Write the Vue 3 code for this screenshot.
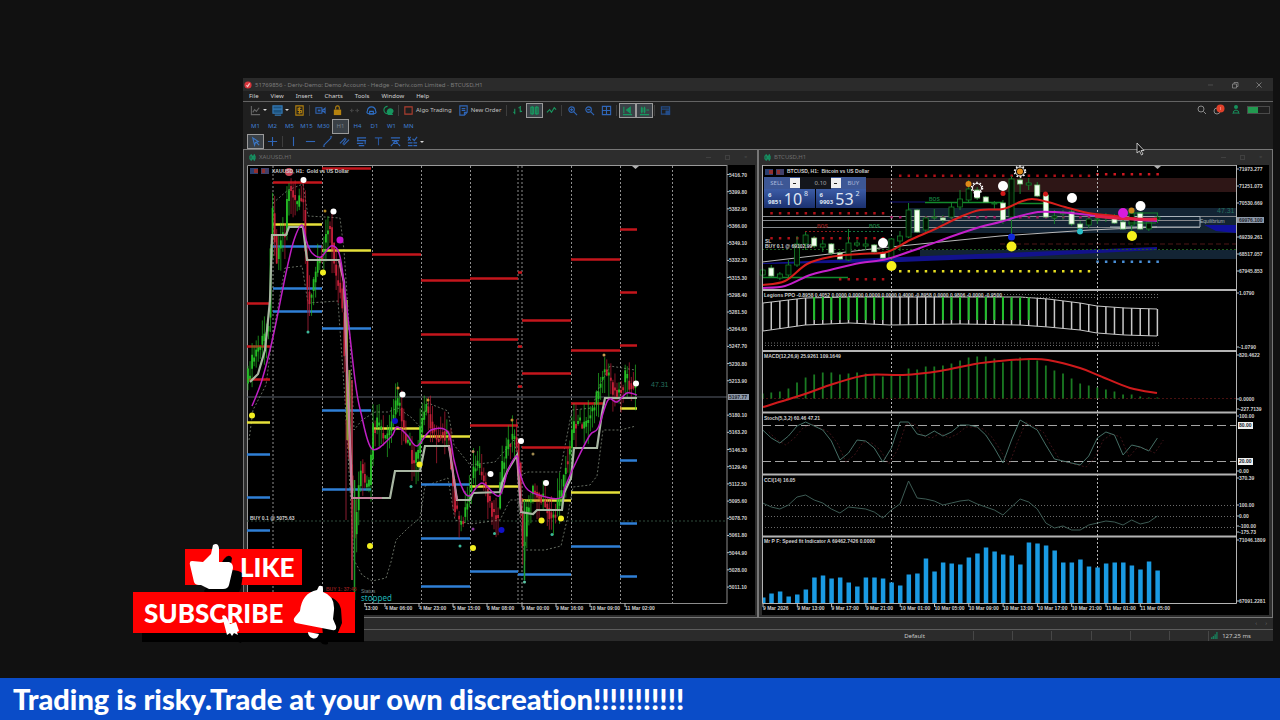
<script setup>
import { ref } from 'vue'

const volume = ref('0.10')

/* ---------- 菜单与工具栏 ---------- */
const menus = ['File', 'View', 'Insert', 'Charts', 'Tools', 'Window', 'Help']
const timeframes = ['M1', 'M2', 'M5', 'M15', 'M30', 'H1', 'H4', 'D1', 'W1', 'MN']

const BLUE = '#2f66b8'
const GREEN = '#17965f'
const GOLD = '#b5820f'
const GREY = '#666'

const mainTools = [
  { name: 'Chart type', caret: true, paths: [{ d: 'M1.5 1v9.5H11M3 8l2-3 2 2 3-4', s: GREY }] },
  { name: 'Profiles', caret: true, paths: [{ d: 'M1 1h10v8H1z', f: '#1d5480' }, { d: 'M1 1h10v8H1zM1 4.5h10M3 11h7', s: '#3479b5' }] },
  { name: 'Symbols', paths: [{ d: 'M2 1h8v10H2z', s: GOLD }, { d: 'M8 3.5H4.500V6H8v2.500H4M6 2.500v7', s: GOLD }] },
  { sep: true },
  { name: 'Video', paths: [{ d: 'M1 3h6.500v6H1zM8 6l3-2.500v5z', s: BLUE }, { d: 'M3 5h3v2H3z', f: BLUE }] },
  { name: 'Lock', paths: [{ d: 'M2 5h8v6H2z', f: GOLD }, { d: 'M4 5V3q0-2 2-2t2 2v2', s: GOLD }] },
  { name: 'Signals', paths: [{ d: 'M1 6h1M4 6h1M7 6h1M10 6h1M3 4v4M9 4v4', s: '#4b4b4b' }] },
  { name: 'Cloud', paths: [{ d: 'M3 9.500Q0 9 1.500 6.500 2 2 6 2t4.500 4.500Q12 9 9 9.500zM4 7h4v3H4z', s: '#2e70c8' }] },
  { name: 'Community', paths: [{ d: 'M5 5a3.500 3 0 1 1 5 4l1 2H7q-3 0-3-4z', f: GREEN }, { d: 'M5 1.500a4 4 0 1 0 0 8', s: GREEN }] },
  { sep: true },
  { name: 'Algo Trading', label: true, paths: [{ d: 'M2 2h8v8H2z', s: '#b03f30' }] },
  { name: 'New Order', label: true, paths: [{ d: 'M2 1h8v7l-3 3H2zM4 4h4M4 6h4M7 11V8h3', s: BLUE }] },
  { sep: true },
  { name: 'Bars', paths: [{ d: 'M3 4v6M1.500 8H3M9 1v7M7 3h2M9 7h2', s: GREEN }] },
  { name: 'Candles', active: true, paths: [{ d: 'M3.500 1v10M8.500 1v10', s: GREEN }, { d: 'M2 2.500h3v7H2zM7 2.500h3v7H7z', s: GREEN }] },
  { name: 'Line', paths: [{ d: 'M1 8l3-3 2 3 3-5 2 2', s: GREEN }] },
  { sep: true },
  { name: 'Zoom in', paths: [{ d: 'M8 5a3 3 0 1 1-6 0 3 3 0 0 1 6 0zM7.500 7.500L11 11M3.500 5h3M5 3.500v3', s: BLUE }] },
  { name: 'Zoom out', paths: [{ d: 'M8 5a3 3 0 1 1-6 0 3 3 0 0 1 6 0zM7.500 7.500L11 11M3.500 5h3', s: BLUE }] },
  { name: 'Tile windows', paths: [{ d: 'M1.500 1.500h9v9h-9zM6 1.500v9M1.500 6h9', s: BLUE }] },
  { sep: true },
  { name: 'Auto scroll', active: true, paths: [{ d: 'M2 2v7M5 5.500l4-3v6zM1 10.500h10', s: GREEN }, { d: 'M5 5.500l4-3v6z', f: GREEN }] },
  { name: 'Chart shift', active: true, paths: [{ d: 'M3 2v7M6 2v7M8 5.500h3M1 10.500h10', s: GREEN }, { d: 'M2 3h2v5H2zM5 3h2v5H5z', f: GREEN }] },
  { sep: true },
  { name: 'Templates', paths: [{ d: 'M1.500 2h9v8h-9zM1.500 4.500h9', s: '#244c87' }, { d: 'M6 6h5v5H6z', f: '#244c87' }] },
]

const drawTools = [
  { name: 'Cursor', active: true, paths: [{ d: 'M3 2l6 4-3 1-1 3zM7 7l3 3', s: '#3b78c8' }] },
  { name: 'Crosshair', paths: [{ d: 'M6 1v10M1 6h10', s: BLUE }] },
  { sep: true },
  { name: 'Vertical line', paths: [{ d: 'M6 1v10', s: BLUE }] },
  { name: 'Horizontal line', paths: [{ d: 'M1 6h10', s: BLUE }] },
  { name: 'Trendline', paths: [{ d: 'M2 10l8-8M1 11h2M9 1h2', s: BLUE }] },
  { name: 'Channel', paths: [{ d: 'M1 8l6-6M5 10l6-6M4 9l4-6', s: BLUE }] },
  { name: 'Fibonacci', paths: [{ d: 'M1 2h10M1 5h10M1 8h7M3 10.500h6M2 2v4M10 5v4', s: BLUE }] },
  { name: 'Text', paths: [{ d: 'M2 2h8M6 2v8', s: '#28559a' }] },
  { name: 'Gann', paths: [{ d: 'M1 2h10M2 5h8M1 11l5-6 5 6M3 8h6', s: BLUE }] },
  { name: 'Shapes', caret: true, paths: [{ d: 'M1 1l3 4M4 1L1 5M6 3l2 2 3-4M1 7.500h5M1 10.500h5M7 7.500h4M7 10.500h4', s: BLUE }] },
]

/* ---------- 曲线工具 ---------- */
const line = (pts) => 'M' + pts.map((p) => p.join(' ')).join('L')

function smooth(pts) {
  let d = `M${pts[0][0]} ${pts[0][1]}`
  for (let i = 0; i < pts.length - 1; i++) {
    const p0 = pts[i - 1] || pts[i]
    const p1 = pts[i]
    const p2 = pts[i + 1]
    const p3 = pts[i + 2] || p2
    d += `C${p1[0] + (p2[0] - p0[0]) / 6} ${p1[1] + (p2[1] - p0[1]) / 6} ${p2[0] - (p3[0] - p1[0]) / 6} ${p2[1] - (p3[1] - p1[1]) / 6} ${p2[0]} ${p2[1]}`
  }
  return d
}

function valueAt(pts, x) {
  for (let i = 1; i < pts.length; i++) {
    if (x <= pts[i][0]) {
      const [x0, y0] = pts[i - 1]
      const [x1, y1] = pts[i]
      return y0 + ((y1 - y0) * (x - x0)) / (x1 - x0)
    }
  }
  return pts[pts.length - 1][1]
}

const noise = (n) => {
  const v = Math.sin(n * 12.9898) * 43758.5453
  return v - Math.floor(v)
}

/* ---------- XAUUSD ---------- */
const goldPath = [
  [247, 380], [252, 362], [256, 352], [262, 342], [268, 328], [270, 290], [271, 205], [273, 215], [277, 262],
  [281, 232], [285, 235], [288, 184], [291, 190], [294, 197], [297, 208], [299, 198], [303, 200], [305, 250],
  [308, 300], [312, 290], [318, 262], [322, 250], [325, 238], [328, 226], [331, 228], [333, 255], [336, 280],
  [340, 285], [343, 320], [346, 400], [348, 450], [352, 490], [355, 540], [357, 505], [361, 462], [365, 488], [369, 485],
  [371, 460], [373, 430], [377, 425], [385, 440], [390, 430], [396, 404], [400, 408], [404, 435], [410, 450],
  [413, 465], [418, 455], [421, 425], [426, 405], [430, 420], [436, 440], [442, 430], [448, 438], [451, 470],
  [454, 500], [459, 525], [463, 518], [468, 500], [472, 475], [476, 465], [482, 476], [490, 503], [495, 518],
  [498, 510], [502, 470], [506, 450], [510, 440], [514, 436], [518, 445], [520, 500], [523, 550], [525, 535],
  [527, 510], [532, 490], [540, 495], [546, 505], [552, 518], [558, 505], [562, 485], [566, 460], [570, 448],
  [573, 425], [578, 420], [583, 430], [590, 412], [596, 402], [600, 380], [604, 368], [610, 380], [614, 390],
  [620, 390], [625, 378], [630, 384], [637, 392],
]

const goldBars = []
for (let i = 0; i < 190; i++) {
  const x = 248 + i * 2.05
  if (x > 637) break
  const open = valueAt(goldPath, x - 2)
  const close = valueAt(goldPath, x) + (noise(i) - 0.5) * 16
  goldBars.push({
    x,
    top: Math.min(open, close),
    h: Math.max(3, Math.abs(close - open)),
    high: Math.min(open, close) - noise(i + 400) * 20,
    low: Math.max(open, close) + noise(i + 900) * 24,
    color: close < open ? '#25bd25' : '#c42038',
  })
}

const goldDays = [273, 322.5, 372.5, 421.5, 470.5, 518, 522, 571.5, 620.5, 672.5]

const RED = '#c4161c'
const YEL = '#e6e03a'
const AZU = '#2f7fd6'
const goldLevels = [
  [RED, 322, 371, 168], [RED, 273, 322, 182], [RED, 247, 270, 303], [RED, 247, 270, 346], [RED, 247, 270, 379],
  [RED, 372, 421, 254], [RED, 421, 470, 280], [RED, 470, 518, 278], [RED, 421, 470, 334], [RED, 470, 518, 339],
  [RED, 421, 470, 382], [RED, 470, 518, 425], [RED, 518, 522, 272], [RED, 518, 522, 346], [RED, 518, 522, 386],
  [RED, 522, 571, 320], [RED, 522, 571, 373], [RED, 522, 571, 447], [RED, 571, 620, 259], [RED, 571, 620, 350],
  [RED, 571, 605, 403], [RED, 620, 637, 229], [RED, 620, 637, 292], [RED, 620, 637, 345],
  [YEL, 273, 322, 224], [YEL, 322, 371, 250], [YEL, 247, 270, 422], [YEL, 372, 421, 428], [YEL, 421, 470, 436],
  [YEL, 470, 518, 486], [YEL, 522, 571, 500], [YEL, 571, 620, 492], [YEL, 620, 637, 408],
  [AZU, 273, 322, 246], [AZU, 273, 322, 288], [AZU, 273, 322, 311], [AZU, 322, 371, 328], [AZU, 322, 371, 410],
  [AZU, 322, 371, 489], [AZU, 247, 270, 454], [AZU, 247, 270, 497], [AZU, 247, 270, 530], [AZU, 421, 470, 484],
  [AZU, 421, 470, 538], [AZU, 421, 470, 586], [AZU, 470, 518, 571], [AZU, 518, 571, 574], [AZU, 571, 620, 546],
  [AZU, 620, 637, 460], [AZU, 620, 637, 523], [AZU, 620, 637, 576],
]

const goldStep = line([
  [250, 382], [258, 374], [265, 350], [270, 300], [272, 235], [286, 235], [289, 227], [303, 227], [307, 260],
  [339, 260], [344, 282], [346, 340], [352, 498], [390, 498], [395, 471], [420, 471], [425, 446], [449, 446],
  [457, 500], [470, 500], [473, 493], [500, 492], [502, 483], [508, 470], [517, 455], [521, 512], [533, 514],
  [537, 510], [562, 510], [564, 493], [571, 478], [574, 448], [597, 448], [602, 413], [605, 398], [637, 398],
])
const goldMa = smooth([
  [252, 406], [262, 380], [273, 337], [286, 273], [294, 240], [302, 225], [307, 243], [312, 253], [321, 257],
  [331, 246], [339, 253], [344, 283], [355, 380], [361, 413], [372, 449], [391, 437], [397, 427], [407, 435],
  [417, 446], [431, 430], [448, 432], [454, 460], [461, 485], [469, 496], [482, 483], [499, 496], [508, 470],
  [517, 456], [520, 473], [528, 490], [550, 498], [562, 497], [565, 487], [577, 460], [590, 435], [598, 428],
  [608, 400], [617, 402], [627, 393], [637, 395],
])
const goldBandUp = line([
  [273, 203], [280, 197], [288, 190], [303, 184], [308, 216], [325, 217], [340, 218], [344, 250], [350, 340],
  [354, 430], [362, 420], [375, 412], [388, 412], [398, 408], [412, 418], [421, 428], [428, 403], [448, 411], [454, 445],
  [470, 465], [495, 462], [514, 440], [521, 475], [528, 472], [560, 472], [572, 410], [592, 408], [600, 385], [610, 366], [635, 370],
])
const goldBandLow = line([
  [249, 440], [253, 410], [266, 385], [272, 340], [285, 268], [302, 266], [308, 303], [338, 301], [345, 400],
  [354, 560], [362, 575], [372, 581], [386, 578], [391, 562], [396, 540], [408, 528], [420, 518], [425, 486],
  [448, 478], [455, 520], [470, 524], [500, 520], [510, 500], [518, 500], [524, 550], [545, 550], [561, 546],
  [567, 520], [573, 487], [590, 485], [597, 476], [603, 430], [620, 430], [636, 426],
])

const goldDots = [
  [289, 172, 4, '#c84858'], [303.500, 180, 3, '#fff'], [333.500, 211.500, 3, '#fff'], [402.500, 394.500, 3, '#fff'],
  [490.500, 474, 3, '#fff'], [521, 441, 3, '#fff'], [546, 483, 3, '#fff'], [636, 383.500, 3, '#fff'],
  [340, 240, 3.500, '#c414cc'], [323, 272.500, 3, '#f2ee20'], [252, 415.500, 3, '#f2ee20'], [370, 546, 3, '#f2ee20'],
  [419.500, 464.500, 3, '#f2ee20'], [473, 548, 3, '#f2ee20'], [541.500, 520.500, 3, '#f2ee20'], [561, 518.500, 3, '#f2ee20'],
  [395, 421, 3, '#1010c8'], [501.500, 530, 3, '#1010c8'], [325, 211, 1.500, '#b58a1e'], [398, 388, 1.500, '#d08a30'],
  [428, 400, 1.500, '#d08a30'], [473, 451.500, 1.500, '#c08a60'], [512, 420, 1.500, '#c88a30'], [533, 454, 1.500, '#a08a50'],
  [604, 355, 1.500, '#c89a50'], [308, 332, 1.500, '#3cb89a'], [411, 486.500, 1.500, '#3cb89a'], [460, 546, 1.500, '#3cb89a'],
  [494.500, 533.500, 1.500, '#3cb89a'], [552, 534.500, 1.500, '#3cb89a'], [524.500, 582, 1.500, '#5cc8a8'], [473, 529, 1.500, '#8a3aa0'],
]

const goldPrices = []
for (let i = 0; i < 25; i++) {
  if (i !== 13) goldPrices.push({ y: 174.5 + i * 17.19, text: (5416.7 - i * 16.9).toFixed(2) })
}
const goldTimes = [
  [365, '13:00'], [385, '4 Mar 06:00'], [419, '4 Mar 23:00'], [453, '5 Mar 15:00'], [487, '6 Mar 08:00'],
  [522, '9 Mar 00:00'], [556, '9 Mar 16:00'], [590, '10 Mar 09:00'], [625, '11 Mar 02:00'],
]

/* ---------- BTCUSD ---------- */
const barX = (k) => 762.7 + k * 8.58
const range = (a, b) => Array.from({ length: b - a + 1 }, (_, i) => a + i)

// [实体上沿, 实体下沿, 最高, 最低, 实心]
const btcCandles = [
  [270, 275, 268, 277, 0], [268, 276, 265, 278, 1], [274, 278, 272, 280, 0], [265, 275, 260, 280, 0], [244, 265, 236, 267, 0],
  [235, 244, 232, 250, 0], [238, 246, 236, 248, 1], [244, 247, 240, 252, 0], [244, 253, 243, 255, 1], [253, 259, 251, 260, 1],
  [243, 260, 229, 261, 0], [243, 245, 240, 247, 0], [244, 246, 239, 250, 0], [245, 252, 244, 253, 1], [253, 258, 251, 259, 1],
  [239, 258, 238, 260, 0], [236, 241, 231, 251, 0], [210, 237, 203, 238, 0], [210, 232, 209, 233, 1], [218, 230, 216, 232, 0],
  [217, 218, 209, 220, 0], [218, 220, 215, 223, 1], [207, 217, 203, 219, 0], [199, 207, 190, 210, 0], [189, 200, 180, 202, 0],
  [190, 198, 187, 200, 1], [197, 202, 196, 203, 1], [203, 204, 201, 209, 0], [203, 220, 200, 224, 1], [179, 217, 176, 234, 0],
  [180, 184, 177, 194, 1], [183, 185, 178, 190, 0], [185, 196, 182, 197, 1], [195, 217, 194, 218, 1], [216, 218, 210, 224, 0],
  [213, 214, 210, 220, 0], [212, 224, 210, 226, 1], [224, 228, 221, 230, 1], [219, 225, 218, 228, 0], [219, 220, 216, 224, 0],
  [216, 217, 213, 222, 0], [216, 223, 214, 224, 1], [222, 229, 217, 230, 1], [213, 225, 212, 232, 0], [213, 229, 212, 230, 1],
  [222, 229, 219, 231, 0], [217, 219, 213, 223, 0],
]

const btcMa = smooth([
  [763, 285], [785, 281], [807, 264], [830, 257], [860, 254], [887, 252], [910, 240], [933, 230], [960, 217], [980, 210],
  [1003, 209], [1020, 202], [1032, 199], [1048, 202], [1065, 207], [1088, 213], [1115, 216], [1138, 219], [1157, 219],
])
const btcSlow = smooth([
  [763, 288], [785, 286], [810, 275], [830, 270], [860, 263], [887, 259], [920, 248], [950, 237], [980, 227], [1000, 222],
  [1020, 216], [1038, 212], [1055, 212], [1080, 214], [1110, 217], [1140, 220], [1157, 221],
])

const dotRows = [
  { y: 213, from: 1, to: 14, c: '#b01018' },
  { y: 238, from: 1, to: 14, c: '#b01018' },
  { y: 279, from: 9, to: 14, c: '#b01018' },
  { y: 175.5, from: 16, to: 38, c: '#b01018' },
  { y: 174, from: 39, to: 46, c: '#d01820' },
  { y: 217, from: 15, to: 44, c: '#a01860' },
  { y: 271, from: 16, to: 38, c: '#e6de20' },
  { y: 261.5, from: 39, to: 46, c: '#4a90d8' },
]

const btcDots = [
  [883, 243, 5, '#fff'], [1003, 186, 5, '#fff'], [1072, 198, 5, '#fff'], [1140.500, 206, 5, '#fff'],
  [891.500, 266, 5, '#f6f01c'], [1011.500, 246.500, 5, '#f6f01c'], [1132, 236, 5, '#f6f01c'], [1123, 213, 5, '#d81cdc'],
  [968.500, 184, 3, '#e08a18'], [1131.500, 210.500, 3, '#c8861c'], [1011.500, 237, 3.500, '#1028d8'], [1003, 193.500, 2.500, '#d01818'],
  [1045.500, 194, 2.500, '#d01818'], [1080, 231.500, 3, '#28c0c8'],
]

const ppoTop = [[763, 303], [805, 298], [850, 297], [1020, 297], [1048, 299], [1080, 303], [1097, 306], [1125, 308], [1157, 309]]
const ppoLow = [[763, 331], [805, 325], [850, 323], [890, 325], [960, 324], [1020, 325], [1048, 327], [1080, 330], [1097, 333], [1125, 335], [1157, 336]]
const ppoGreen = (k) => (k >= 6 && k <= 14) || (k >= 21 && k <= 31)

const macd = [
  5, 6, 7, 10, 16, 21, 24, 26, 26, 24, 25, 26, 25, 24, 22, 23, 23, 30, 29, 32, 32, 33, 35, 38, 41, 42, 42, 40, 36, 38,
  41, 40, 38, 33, 28, 25, 20, 15, 13, 11, 9, 7, 4, 4, 2, 1, 1,
]
const macdSignal = smooth([
  [763, 407], [805, 394], [833, 384], [867, 375], [903, 375], [940, 371], [975, 364], [1000, 361], [1030, 359],
  [1048, 360], [1080, 368], [1100, 376], [1130, 388], [1157, 393],
])
const stoch = [
  430, 438, 443, 436, 426, 422, 426, 430, 441, 460, 453, 440, 441, 448, 462, 448, 422, 422, 434, 436, 431, 436, 432,
  425, 425, 427, 435, 448, 463, 440, 420, 425, 430, 445, 459, 461, 463, 465, 456, 438, 432, 435, 455, 445, 447, 451, 438,
]
const cci = [
  503, 507, 509, 505, 497, 495, 500, 503, 509, 513, 507, 508, 509, 512, 518, 510, 504, 481, 498, 499, 501, 505, 503, 501,
  500, 504, 507, 510, 515, 507, 499, 502, 509, 523, 528, 526, 530, 530, 525, 523, 521, 522, 525, 520, 524, 522, 516,
]
const speed = [
  6, 10, 12, 7, 9, 14, 26, 28, 25, 26, 21, 17, 26, 26, 25, 21, 18, 29, 30, 45, 32, 41, 40, 39, 46, 50, 56, 52, 49, 48,
  39, 61, 60, 58, 53, 41, 41, 44, 37, 36, 40, 41, 41, 38, 34, 42, 33,
]
const series = (arr, dx = 0, dy = 0) => line(arr.map((y, k) => [barX(k) + dx, y + dy]))

const btcPrices = [
  [169, '71973.277'], [186, '71251.073'], [203, '70530.669'], [237, '69239.261'], [254, '68517.057'], [271, '67945.853'],
  [293, '1.0790'], [347, '-1.0790'], [355, '820.4622'], [399, '0.0000'], [409, '-227.7139'], [416, '100.00'],
  [471, '0.00'], [478, '370.39'], [505, '100.00'], [516, '0.00'], [526, '-100.00'], [532, '-175.73'],
  [540, '71046.1809'], [601, '67091.2281'],
]
const btcTimes = [
  '9 Mar 2026', '9 Mar 13:00', '9 Mar 17:00', '9 Mar 21:00', '10 Mar 01:00', '10 Mar 05:00', '10 Mar 09:00',
  '10 Mar 13:00', '10 Mar 17:00', '10 Mar 21:00', '11 Mar 01:00', '11 Mar 05:00',
].map((text, i) => ({ text, x: 763 + i * 34.3 }))

const panelTitles = [
  [297, 'Legions PPO -0.8958 0.4052 0.0000 0.0000 0.0000 0.0000 0.4000 -0.8958 0.0000 0.9806 -0.0000 -0.9500'],
  [358, 'MACD(12,26,9) 25.9261 109.1649'],
  [420, 'Stoch(5,3,2) 60.46 47.21'],
  [482, 'CCI(14) 16.05'],
  [543, 'Mr P F:  Speed fit Indicator A 69462.7426 0.0000'],
]
</script>

<template>
  <div class="stage">
    <main class="scene">
      <section class="terminal">
        <header class="titlebar">
          <svg class="logo" viewBox="0 0 10 10" aria-hidden="true">
            <circle cx="5" cy="5" r="4.500" fill="#d8353c" />
            <path d="M3 5.500l1.500 1.500L7 3" fill="none" stroke="#f6c8c8" stroke-width="1.500" />
          </svg>
          <span class="titlebar-text">51769856 - Deriv-Demo: Demo Account - Hedge - Deriv.com Limited - BTCUSD,H1</span>
          <div class="win-btns">
            <button type="button" aria-label="Minimize">
              <svg viewBox="0 0 8 8"><path d="M1 4h5" stroke="#555" /></svg>
            </button>
            <button type="button" aria-label="Restore">
              <svg viewBox="0 0 8 8"><path d="M1.500 3h4v4h-4zM3 3V1.500h4v4H5.500" /></svg>
            </button>
            <button type="button" aria-label="Close">
              <svg viewBox="0 0 8 8"><path d="M1.500 1.500l5 5M6.500 1.500l-5 5" /></svg>
            </button>
          </div>
        </header>

        <nav class="menubar">
          <button v-for="m in menus" :key="m" type="button">{{ m }}</button>
        </nav>

        <div class="toolbars">
          <div class="toolbar">
            <template v-for="(t, i) in mainTools" :key="i">
              <span v-if="t.sep" class="sep"></span>
              <button v-else type="button" class="tool" :class="{ 'is-on': t.active, 'has-caret': t.caret, 'has-label': t.label }" :aria-label="t.name">
                <svg viewBox="0 0 12 12" aria-hidden="true">
                  <path v-for="(p, j) in t.paths" :key="j" :d="p.d" :fill="p.f || 'none'" :stroke="p.s || 'none'" />
                </svg>
                <span v-if="t.label">{{ t.name }}</span>
                <i v-if="t.caret" class="caret"></i>
              </button>
            </template>
            <div class="account">
              <button type="button" aria-label="Search">
                <svg viewBox="0 0 12 12"><path d="M8 5a3 3 0 1 1-6 0 3 3 0 0 1 6 0zM7.500 7.500L10 10" stroke="#8a8a8a" /></svg>
              </button>
              <button type="button" aria-label="Notifications">
                <svg viewBox="0 0 12 12">
                  <circle cx="4" cy="7" r="3" stroke="#8a8a8a" />
                  <circle cx="7.500" cy="4.500" r="4" fill="#e0402a" />
                  <path d="M7.500 3v3" stroke="#f08070" />
                </svg>
              </button>
              <button type="button" aria-label="Account">
                <svg viewBox="0 0 12 12">
                  <circle cx="6" cy="3" r="2" fill="#17905c" />
                  <path d="M3 10q0-4 3-4t3 4M5 10V8M7 10V8" stroke="#17905c" />
                </svg>
              </button>
              <span class="battery"><i></i></span>
            </div>
          </div>
          <div class="toolbar">
            <button v-for="t in timeframes" :key="t" type="button" class="tool tf" :class="{ 'is-on': t === 'H1' }">{{ t }}</button>
          </div>
          <div class="toolbar">
            <template v-for="(t, i) in drawTools" :key="i">
              <span v-if="t.sep" class="sep"></span>
              <button v-else type="button" class="tool" :class="{ 'is-on': t.active, 'has-caret': t.caret }" :aria-label="t.name">
                <svg viewBox="0 0 12 12" aria-hidden="true">
                  <path v-for="(p, j) in t.paths" :key="j" :d="p.d" :fill="p.f || 'none'" :stroke="p.s || 'none'" />
                </svg>
                <i v-if="t.caret" class="caret"></i>
              </button>
            </template>
          </div>
        </div>

        <div class="mdi">
          <article class="child">
            <header class="child-title">
              <svg viewBox="0 0 8 8" aria-hidden="true"><path d="M2.500 0v8M6 0v8M1 2h3v4H1zM5 2h2v4H5z" /></svg>
              <span>XAUUSD,H1</span>
              <div class="child-btns"><i class="min"></i><i class="max"></i><i class="close">×</i></div>
            </header>
            <div class="chart">
              <svg class="plot" viewBox="244 164 513 451">
                <rect x="247" y="165" width="508" height="450" fill="#000" />
                <path d="M247.500 603V165.500H727" stroke="#9a9a9a" />
                <path v-for="x in goldDays" :key="x" :d="`M${x} 166V603`" stroke="#8e8e8e" stroke-width="1" stroke-dasharray="2 2" />
                <path d="M247 397H727" stroke="#585f6b" />
                <path d="M247 521H727" stroke="#2e4a3a" stroke-dasharray="2 2" />
                <path :d="goldBandUp" stroke="#8f9a8a" stroke-width="0.700" stroke-dasharray="2 2" />
                <path :d="goldBandLow" stroke="#8f9a8a" stroke-width="0.700" stroke-dasharray="2 2" />
                <path v-for="(l, i) in goldLevels" :key="'l' + i" :d="`M${l[1]} ${l[3]}.500H${l[2]}`" :stroke="l[0]" stroke-width="2.500" />
                <g v-for="(b, i) in goldBars" :key="'b' + i" :stroke="b.color">
                  <path :d="`M${b.x} ${b.high}V${b.low}`" stroke-width="0.900" opacity="0.750" />
                  <path :d="`M${b.x} ${b.top}v${b.h}`" stroke-width="1.800" />
                </g>
                <path d="M347 300V440M349.500 370V450" stroke="#8a9a30" stroke-width="2" />
                <path d="M352 380V580" stroke="#c83a50" stroke-width="1.500" />
                <path d="M354.500 480V600M524.500 500V580" stroke="#1e9a2a" stroke-width="1.500" />
                <path d="M308 300V331M346 420V520" stroke="#8a1c30" />
                <path :d="goldStep" stroke="#a9b7a3" stroke-width="2.200" />
                <path d="M339 260L344 282 346 340 352 498H382M449 446L457 500M517 455L521 512" stroke="#cf6f9c" stroke-width="1.500" />
                <path :d="goldMa" stroke="#bf1fc4" stroke-width="1.500" />
                <circle v-for="(c, i) in goldDots" :key="'c' + i" :cx="c[0]" :cy="c[1]" :r="c[2]" :fill="c[3]" />
                <path d="M632 166h7l-3.500 3z" fill="#b0b0b0" />

                <path d="M727 165V603.500M247 603.500H727" stroke="#8c8c8c" />
                <g v-for="p in goldPrices" :key="p.text">
                  <path :d="`M727 ${p.y}h2`" stroke="#bdbdbd" />
                  <text x="729" :y="p.y + 2">{{ p.text }}</text>
                </g>
                <rect x="728" y="394" width="21" height="6" fill="#8d98a8" />
                <text x="729" y="399" class="dark">5197.77</text>
                <g v-for="t in goldTimes" :key="t[1]">
                  <path :d="`M${t[0]} 603v4`" stroke="#bdbdbd" />
                  <text :x="t[0]" y="610">{{ t[1] }}</text>
                </g>

                <path d="M250 168h8v6h-8z" fill="#2b3f70" />
                <path d="M254 169h4v4h-4z" fill="#8f3030" />
                <path d="M261 168h8v6h-8z" fill="#40406a" />
                <path d="M262 169h3v4h-3z" fill="#8f3030" />
                <text x="272" y="173">XAUUSD, H1:&nbsp; Gold vs US Dollar</text>
                <text x="250" y="520">BUY 0.1 @ 5075.63</text>
                <text x="651" y="387" class="teal">47.31</text>
                <text x="361" y="593" class="faint">Status</text>
                <text x="326" y="591" class="maroon">BUY 1: 37:45</text>
                <text x="361" y="601" class="stopped">stopped</text>
              </svg>
            </div>
          </article>

          <article class="child">
            <header class="child-title">
              <svg viewBox="0 0 8 8" aria-hidden="true"><path d="M2.500 0v8M6 0v8M1 2h3v4H1zM5 2h2v4H5z" /></svg>
              <span>BTCUSD,H1</span>
              <div class="child-btns"><i class="min"></i><i class="max"></i><i class="close">×</i></div>
            </header>
            <div class="chart">
              <svg class="plot" viewBox="759 164 513 451">
                <rect x="762" y="165" width="507" height="450" fill="#000" />
                <rect x="866" y="178" width="371" height="14" fill="#2e1616" />
                <rect x="908" y="208" width="329" height="25" fill="#132434" />
                <rect x="920" y="250" width="317" height="9" fill="#132434" />
                <path d="M762 263L900 257 1157 247V250L1000 258 900 262 762 264z" fill="#12128c" />
                <path d="M1204 225h32v8l-20-2z" fill="#10109c" />
                <path d="M762 165.500H1237" stroke="#9a9a9a" />
                <path d="M762 216.500H1237M762 220.500H1200M762 227.500H1200" stroke="#85888c" />
                <path d="M1110 216.500H1200V227H1110" stroke="#a9b2ba" />
                <path d="M762 249.500H1237" stroke="#205a20" stroke-dasharray="2 2" />
                <path d="M1000 244H1237" stroke="#702020" stroke-dasharray="5 3" stroke-width="0.700" />
                <path d="M925 202.500H1003M762 277.500H848M1015 203.500H1045" stroke="#138a2c" stroke-width="1.500" />
                <path d="M805 231.500H845" stroke="#8c1c1c" stroke-dasharray="2 2" />
                <path d="M845 231.500H885" stroke="#14703c" stroke-dasharray="2 2" />
                <path d="M890 202H925" stroke="#14147c" />
                <path d="M762 262L880 248 1000 236 1090 230 1157 227" stroke="#b8b8b8" />

                <g v-for="r in dotRows" :key="r.y">
                  <rect v-for="k in range(r.from, r.to)" :key="k" :x="barX(k) - 1" :y="r.y - 1" width="2.500" height="2.500" :fill="r.c" />
                </g>
                <path d="M891.500 166V603M1097.500 166V603" stroke="#b4b4b4" stroke-dasharray="2 2" />

                <g v-for="(c, k) in btcCandles" :key="'k' + k">
                  <path :d="`M${barX(k)} ${c[2]}V${c[3]}`" stroke="#15802a" />
                  <rect
                    :x="barX(k) - 2.500"
                    :y="c[0]"
                    width="5"
                    :height="c[1] - c[0]"
                    :fill="c[4] ? '#f4fff0' : '#001000'"
                    :stroke="c[4] ? '#7ac47a' : '#15802a'"
                    stroke-width="0.800"
                  />
                </g>
                <path :d="btcSlow" stroke="#c41fca" stroke-width="2" />
                <path :d="btcMa" stroke="#d81f1c" stroke-width="2" />
                <path d="M1095 216Q1130 220 1157 219" stroke="#e01f48" stroke-width="3" />
                <path d="M1128 213h30M1128 223h28" stroke="#15802a" />
                <circle v-for="(c, i) in btcDots" :key="'d' + i" :cx="c[0]" :cy="c[1]" :r="c[2]" :fill="c[3]" />
                <circle cx="977" cy="188" r="4.500" stroke="#fff" stroke-width="1" />
                <circle cx="977" cy="188" r="5.500" stroke="#fff" stroke-width="1.500" stroke-dasharray="1.500 2" />
                <path d="M974 191h6v6h-6z" fill="#fff" />
                <circle cx="1020" cy="171.500" r="4.500" fill="#000" stroke="#fff" />
                <circle cx="1020" cy="171.500" r="3" fill="#e08a18" />
                <circle cx="1020" cy="171.500" r="5.500" stroke="#fff" stroke-width="1.500" stroke-dasharray="1.500 2" />
                <path d="M1154 166h7l-3.500 3z" fill="#b0b0b0" />

                <g stroke="#c8c8c8" stroke-width="1">
                  <path :d="line(ppoTop)" />
                  <path :d="line(ppoLow)" />
                  <path
                    v-for="k in range(0, 46)"
                    :key="'p' + k"
                    :d="`M${barX(k)} ${valueAt(ppoTop, barX(k))}V${valueAt(ppoLow, barX(k))}`"
                    stroke-width="1.500"
                  />
                </g>
                <path
                  v-for="k in range(0, 46).filter(ppoGreen)"
                  :key="'g' + k"
                  :d="`M${barX(k)} 297V320`"
                  stroke="#1fc02a"
                  stroke-width="2"
                />
                <path d="M1004 294.500H1160M1004 297.500H1160M762 343H1160M762 345.500H1160" stroke="#6e6e6e" stroke-dasharray="1 2" />

                <path d="M762 398.500H1237" stroke="#5c1414" stroke-width="0.800" stroke-dasharray="2 2" />
                <path v-for="(h, k) in macd" :key="'m' + k" :d="`M${barX(k)} 398.500v${-h}`" stroke="#1a7a22" stroke-width="1.800" />
                <path :d="macdSignal" stroke="#cf1a1c" stroke-width="2" />

                <path d="M762 425.500H1237M762 461.500H1237" stroke="#a4a4a4" stroke-dasharray="9 4" />
                <path :d="series(stoch, 6, 2)" stroke="#4a161c" stroke-width="0.800" stroke-dasharray="2 2" />
                <path :d="series(stoch)" stroke="#4d7a70" stroke-width="0.900" />
                <path d="M762 505.500H1237M762 516.500H1237M762 527.500H1237" stroke="#6a6a6a" stroke-dasharray="1 2" />
                <path :d="series(cci)" stroke="#44655e" stroke-width="0.900" />
                <rect v-for="(h, k) in speed" :key="'s' + k" :x="Math.max(763, barX(k) - 2)" :y="603.500 - h" :width="k ? 4.500 : 2.500" :height="h" fill="#1a9ae2" />

                <path d="M762 290H1237M762 351H1237M762 412.500H1237M762 474.500H1237M762 536.500H1237" stroke="#b4b4b4" stroke-width="2" />
                <path d="M762.500 165V603.500H1236.500V165" stroke="#b4b4b4" />

                <g v-for="p in btcPrices" :key="p[0]">
                  <path :d="`M1237 ${p[0]}h2`" stroke="#bdbdbd" />
                  <text x="1239" :y="p[0] + 2">{{ p[1] }}</text>
                </g>
                <rect x="1237" y="217" width="27" height="6" fill="#8d98a8" />
                <text x="1239" y="222" class="dark">69976.100</text>
                <rect x="1238" y="422" width="15" height="7" fill="#f0f0f0" />
                <text x="1239" y="427" class="dark">80.00</text>
                <rect x="1238" y="458" width="15" height="7" fill="#f0f0f0" />
                <text x="1239" y="463" class="dark">20.00</text>
                <g v-for="t in btcTimes" :key="t.text">
                  <path :d="`M${t.x} 603v4`" stroke="#bdbdbd" />
                  <text :x="t.x" y="610">{{ t.text }}</text>
                </g>
                <text v-for="p in panelTitles" :key="p[0]" x="764" :y="p[0]">{{ p[1] }}</text>

                <path d="M765 169h8v6h-8z" fill="#2b3f70" />
                <path d="M769 170h4v4h-4z" fill="#8f3030" />
                <path d="M776 169h8v6h-8z" fill="#40406a" />
                <path d="M777 170h3v4h-3z" fill="#8f3030" />
                <text x="787" y="173">BTCUSD, H1:&nbsp; Bitcoin vs US Dollar</text>
                <text x="765" y="243">SL</text>
                <text x="765" y="248">BUY 0.1 @ 69102.99</text>
                <text x="817" y="228" class="maroon">BOS</text>
                <text x="869" y="228" class="moss">BOS</text>
                <text x="929" y="201" class="moss">BOS</text>
                <text x="1200" y="223" class="equil">Equilibrium</text>
                <text x="1217" y="213" class="teal">47.31</text>
              </svg>

              <form class="deal" @submit.prevent>
                <div class="deal-top">
                  <span class="deal-tag">SELL</span>
                  <button type="button" class="deal-step" aria-label="Decrease"></button>
                  <input v-model="volume" aria-label="Volume" />
                  <button type="button" class="deal-step" aria-label="Increase"></button>
                  <span class="deal-tag">BUY</span>
                </div>
                <div class="deal-row">
                  <button type="button" aria-label="Sell by market">
                    <span class="small">6<br />9851</span><span class="big">10</span><sup>8</sup>
                  </button>
                  <button type="button" aria-label="Buy by market">
                    <span class="small">6<br />9903</span><span class="big">53</span><sup>2</sup>
                  </button>
                </div>
              </form>
            </div>
          </article>
        </div>

        <div class="tabs"><span>‹</span><span>›</span></div>
        <footer class="status">
          <span class="status-profile">Default</span>
          <i></i><i></i><i></i><i></i><i></i><i></i>
          <span class="status-ping">
            <svg viewBox="0 0 8 8" aria-hidden="true"><path d="M0 8V6h1.500v2zM2 8V4.500h1.500V8zM4 8V2.500h1.500V8zM6 8V0h1.500v8z" /></svg>
            127.25 ms
          </span>
        </footer>
      </section>

      <svg class="pointer" viewBox="0 0 10 15" aria-hidden="true">
        <path d="M1 1v10l2.500-2 2 4 1.500-1-2-3.500H8z" fill="#111" stroke="#cfcfcf" stroke-width="0.900" />
      </svg>

      <aside class="promo">
        <button type="button" class="like">
          <svg class="thumb" viewBox="0 0 60 54" aria-hidden="true">
            <path d="M38 16q5-6 8-1l-2 12q10 0 13 4l-2 14q-3 9-14 9H32q-12 0-14-6z" fill="#000" />
            <path d="M6 18q-3 0-2 4l4 17q1 3 5 3h2l8 4h14q5 0 6-4l4-17q0-5-4-6H33V5q-1-6-6-3l-2 9-8 8z" fill="#fff" />
          </svg>
          <span class="promo-text">LIKE</span>
        </button>
        <button type="button" class="subscribe">
          <span class="promo-text">SUBSCRIBE</span>
          <svg class="bell" viewBox="0 0 50 62" aria-hidden="true">
            <path d="M26 12q18-3 22 12l1 14-5 12H30zM25 50l10 1v8q-8 3-10-9z" fill="#000" />
            <path d="M26 1q4-1 4 3v3q12 4 11 18l-1 9 3 7q1 5-4 4L3 38q-4-2-1-6l5-6q2-18 17-21z" fill="#fff" />
            <path d="M15 47l11 2q-2 6-7 4-4-2-4-6z" fill="#fff" />
          </svg>
          <svg class="hand" viewBox="0 0 24 28" aria-hidden="true">
            <path d="M14 18l8 5-2 5-8-3z" fill="#000" />
            <path d="M1 1q3-2 5 2l3 6 6-2 3 9-2 1 1 3-4-2-2 3-2-3-3 2z" fill="#fff" />
          </svg>
        </button>
      </aside>
    </main>

    <p class="ticker">Trading is risky.Trade at your own discreation!!!!!!!!!!!</p>
  </div>
</template>

<style>
body {
  background: #111;
}
</style>

<style scoped>
.stage {
  display: flex;
  flex-direction: column;
  min-height: 100vh;
  background: #111;
  font-family: 'Noto Sans', 'Open Sans', sans-serif;
}

button {
  padding: 0;
  font: inherit;
  color: inherit;
  background: none;
  border: none;
  cursor: pointer;
}

.scene {
  position: relative;
  flex: 1;
  padding: 78px 7px 37px 243px;
}

.terminal {
  display: flex;
  flex-direction: column;
  background: #1f1f1f;
  color: #b4b4b4;
  font-size: 6px;
  line-height: 10px;
}

/* 标题栏 */
.titlebar {
  display: flex;
  align-items: center;
  gap: 3px;
  height: 13px;
  padding-left: 1px;
  background: #2b2b2b;
  color: #7c7c7c;
}

.logo {
  width: 8px;
  height: 8px;
}

.win-btns {
  display: flex;
  gap: 16px;
  margin-left: auto;
  padding-right: 10px;
}

.win-btns button {
  display: flex;
}

.win-btns svg {
  width: 8px;
  height: 8px;
  fill: none;
  stroke: #8a8a8a;
  stroke-width: 0.8;
}

.menubar {
  display: flex;
  gap: 12px;
  height: 10px;
  padding-left: 6px;
  color: #d4d4d4;
}

/* 工具栏 */
.toolbars {
  padding-left: 4px;
  border-top: 1px solid #636363;
}

.toolbar {
  display: flex;
  align-items: center;
  height: 16px;
}

.toolbar:last-child {
  height: 15px;
}

.tool {
  display: inline-flex;
  align-items: center;
  justify-content: center;
  width: 17px;
  height: 15px;
  box-sizing: border-box;
  border: 1px solid transparent;
}

.tool svg {
  flex: none;
  width: 11px;
  height: 11px;
  stroke-width: 1.2;
}

.tool.is-on {
  background: #3a4046;
  border-color: #9a9a9a;
}

.tool.has-caret {
  width: 22px;
  gap: 2px;
}

.tool.has-label {
  width: auto;
  gap: 2px;
  padding: 0 3px 0 1px;
  color: #c0c0c0;
}

.caret {
  border: 2px solid transparent;
  border-top-color: #d8d8d8;
  border-bottom: none;
}

.tf {
  color: #3f80d8;
}

.tf.is-on {
  color: #76818c;
}

.sep {
  width: 1px;
  height: 11px;
  margin: 0 2px 0 1px;
  background: #3d3d3d;
}

.account {
  display: flex;
  align-items: center;
  gap: 5px;
  margin-left: auto;
  padding-right: 3px;
}

.account button {
  display: flex;
}

.account svg {
  width: 12px;
  height: 12px;
  fill: none;
}

.battery {
  width: 23px;
  height: 8px;
  border: 1px solid #4a4a4a;
  box-sizing: border-box;
}

.battery i {
  display: block;
  width: 10px;
  height: 6px;
  background: #229a50;
}

/* 图表窗口 */
.mdi {
  display: grid;
  grid-template-columns: 1fr 1fr;
}

.child {
  min-width: 0;
  padding-bottom: 2px;
  background: #2d2d2d;
  border: 1px solid #777;
}

.child-title {
  display: flex;
  align-items: center;
  gap: 3px;
  height: 14px;
  padding: 0 8px 0 5px;
  color: #6e6e6e;
}

.child-title svg {
  width: 7px;
  height: 7px;
  fill: none;
  stroke: #12a06a;
}

.child-btns {
  display: flex;
  align-items: center;
  gap: 14px;
  margin-left: auto;
  color: #484848;
}

.child-btns i {
  width: 5px;
  font-style: normal;
}

.child-btns .min {
  height: 1px;
  background: #404040;
}

.child-btns .max {
  height: 5px;
  box-sizing: border-box;
  border: 1px solid #404040;
}

.chart {
  position: relative;
}

.plot {
  display: block;
  width: 100%;
  height: auto;
  fill: none;
}

.plot text {
  fill: #d0d0d0;
  font-family: 'Liberation Sans', Arial, sans-serif;
  font-size: 5px;
  font-weight: 700;
}

.plot .dark {
  fill: #20242c;
}

.plot .teal {
  fill: #27705f;
  font-size: 7px;
  font-weight: 400;
}

.plot .faint {
  fill: #7c8c8c;
  font-weight: 400;
}

.plot .maroon {
  fill: #8c1c1c;
}

.plot .moss {
  fill: #157a3c;
}

.plot .equil {
  fill: #aab4bc;
  font-weight: 400;
}

.plot .stopped {
  fill: #1fb4b4;
  font-family: 'Noto Sans', sans-serif;
  font-size: 8px;
  font-weight: 400;
}

/* 一键交易面板 */
.deal {
  position: absolute;
  top: 13px;
  left: 5px;
  width: 102px;
  color: #dfe6f4;
}

.deal-top {
  display: flex;
  align-items: center;
  height: 12px;
  background: #3d5795;
}

.deal-tag {
  flex: 1;
  text-align: center;
  color: #a9b8dc;
}

.deal-step {
  width: 10px;
  height: 10px;
  background:
    linear-gradient(#222, #222) center / 3px 1px no-repeat,
    #f0f0f0;
}

.deal-top input {
  width: 31px;
  height: 12px;
  padding: 0 4px 0 0;
  box-sizing: border-box;
  border: none;
  background: #14161c;
  color: #a8a8a8;
  font: inherit;
  text-align: right;
}

.deal-row {
  display: grid;
  grid-template-columns: 1fr 1fr;
  gap: 1px;
}

.deal-row button {
  display: flex;
  align-items: center;
  gap: 2px;
  height: 19px;
  padding-left: 4px;
  background: linear-gradient(#3c5ca6, #1b3170);
}

.deal .small {
  font-size: 6px;
  line-height: 7px;
  text-align: left;
  font-weight: 700;
}

.deal .big {
  font-size: 16px;
  line-height: 18px;
}

.deal sup {
  align-self: flex-start;
  font-size: 7px;
  line-height: 10px;
}

/* 底部 */
.tabs {
  display: flex;
  justify-content: flex-end;
  gap: 8px;
  height: 11px;
  padding-right: 6px;
  background: #2b2b2b;
  color: #6a6a6a;
}

.status {
  display: flex;
  align-items: center;
  height: 11px;
  padding-left: 64%;
  background: #2b2b2b;
  border-top: 1px solid #5c5c5c;
  color: #c8c8c8;
}

.status-profile {
  flex: 1.8;
  padding-left: 2px;
}

.status i {
  flex: 1;
  height: 9px;
  border-left: 1px solid #474747;
}

.status-ping {
  display: flex;
  align-items: center;
  gap: 4px;
  padding-right: 22px;
  padding-left: 2px;
  border-left: 1px solid #474747;
  white-space: nowrap;
}

.status-ping svg {
  width: 7px;
  height: 7px;
  fill: #17805c;
}

.pointer {
  position: absolute;
  top: 142px;
  right: 134px;
  width: 10px;
  height: 15px;
}

/* 订阅浮层 */
.promo {
  position: absolute;
  bottom: 45px;
  left: 133px;
  display: flex;
  flex-direction: column;
  align-items: flex-start;
  gap: 7px;
  color: #fff;
  font-family: Lato, 'Open Sans', sans-serif;
  font-weight: 900;
  font-size: 26px;
}

.like,
.subscribe {
  position: relative;
  background: #f00;
}

.like {
  width: 117px;
  height: 36px;
  margin-left: 52px;
  padding-left: 55px;
  text-align: left;
}

.subscribe {
  width: 222px;
  height: 41px;
  padding-left: 11px;
  text-align: left;
  box-shadow: 9px 9px 0 #000;
}

.promo-text {
  position: relative;
}

.thumb {
  position: absolute;
  top: -6px;
  left: 1px;
  width: 60px;
  height: 54px;
}

.bell {
  position: absolute;
  top: -7px;
  left: 160px;
  width: 50px;
  height: 62px;
}

.hand {
  position: absolute;
  top: 23px;
  left: 88px;
  width: 24px;
  height: 28px;
}

.ticker {
  height: 42px;
  margin: 0;
  padding-left: 13px;
  background: #0a4cc8;
  color: #fff;
  font-family: Lato, 'Open Sans', sans-serif;
  font-weight: 900;
  font-size: 29px;
  font-variant-ligatures: none;
  line-height: 42px;
  white-space: nowrap;
}
</style>
